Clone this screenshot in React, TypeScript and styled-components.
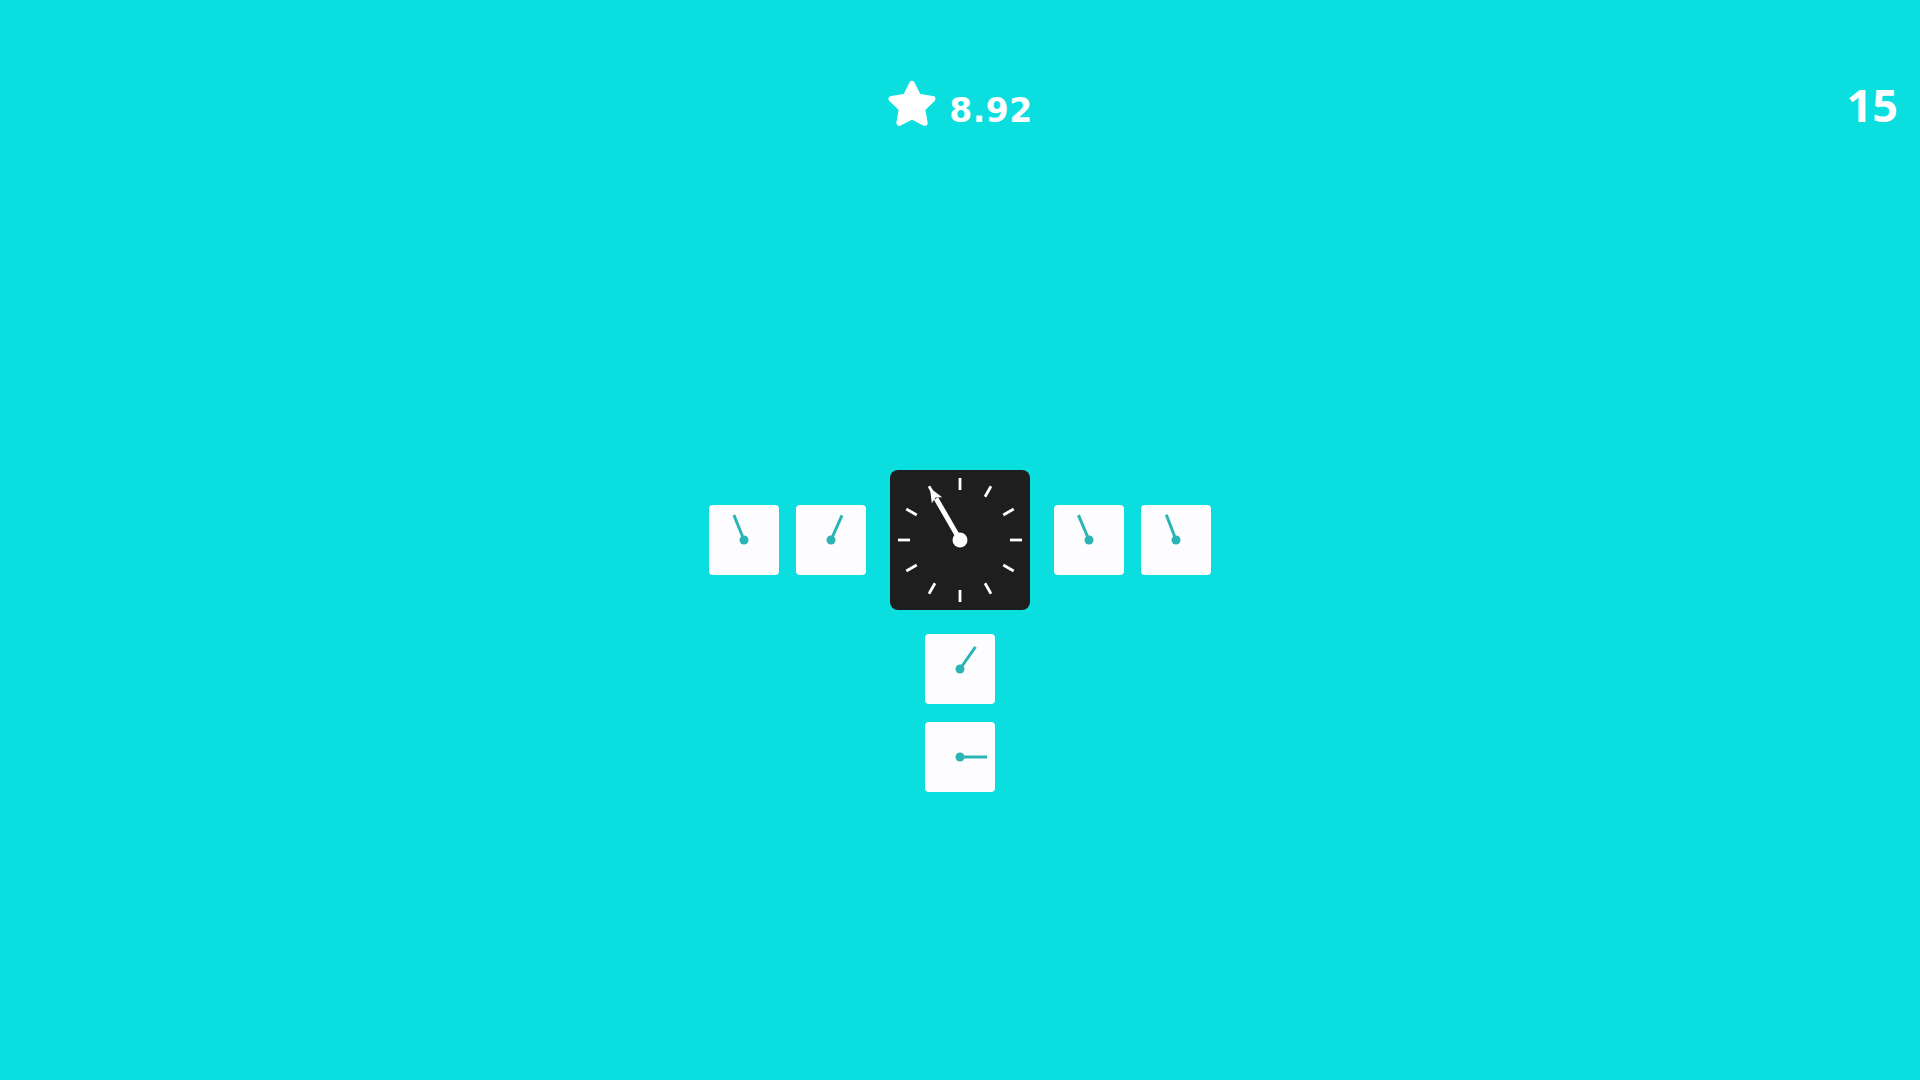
import React from "react";
import styled, { createGlobalStyle } from "styled-components";

const GlobalStyle = createGlobalStyle`
  html, body {
    margin: 0;
    padding: 0;
    background: #0adedf;
  }
  body {
    font-family: "DejaVu Sans", "Liberation Sans", sans-serif;
  }
`;

const Page = styled.div`
  width: 1920px;
  height: 1080px;
  background: #0adedf;
  display: flex;
  flex-direction: column;
  overflow: hidden;
`;

const Header = styled.header`
  display: grid;
  grid-template-columns: 1fr auto 1fr;
  align-items: start;
  height: 140px;
`;

const Score = styled.div`
  grid-column: 2;
  display: flex;
  align-items: center;
  gap: 12px;
  margin-top: 79px;
`;

const ScoreValue = styled.span`
  font-family: "DejaVu Sans", sans-serif;
  font-weight: 700;
  font-size: 33px;
  line-height: 1;
  letter-spacing: 0.5px;
  color: #ffffff;
  margin-top: 14px;
`;

const Level = styled.span`
  grid-column: 3;
  justify-self: end;
  margin-top: 82px;
  margin-right: 22px;
  font-family: "Open Sans", sans-serif;
  font-weight: 700;
  font-size: 45px;
  line-height: 1;
  color: #ffffff;
`;

const Board = styled.main`
  display: flex;
  flex-direction: column;
  align-items: center;
  padding-top: 330px;
`;

const Row = styled.div`
  display: flex;
  align-items: center;
  gap: 24px;
`;

const Pair = styled.div`
  display: flex;
  gap: 17px;
`;

const Column = styled.div`
  display: flex;
  flex-direction: column;
  gap: 18px;
  margin-top: 24px;
`;

const Tile = styled.div`
  width: 70px;
  height: 70px;
  border-radius: 4px;
  background: #fdfdff;
  display: flex;
`;

const Dial = styled.div`
  width: 140px;
  height: 140px;
  border-radius: 8px;
  background: #1e1e1f;
  display: flex;
`;

const Star = () => {
  const cx = 25;
  const cy = 26.5;
  const R = 21.5;
  const r = R * 0.5;
  const pts: string[] = [];
  for (let i = 0; i < 10; i++) {
    const rad = i % 2 === 0 ? R : r;
    const a = (Math.PI / 5) * i - Math.PI / 2;
    pts.push(`${(cx + rad * Math.cos(a)).toFixed(2)},${(cy + rad * Math.sin(a)).toFixed(2)}`);
  }
  return (
    <svg width="50" height="48" viewBox="0 0 50 48">
      <polygon
        points={pts.join(" ")}
        fill="#ffffff"
        stroke="#ffffff"
        strokeWidth="6"
        strokeLinejoin="round"
      />
    </svg>
  );
};

const TileHand = ({ angle }: { angle: number }) => (
  <svg width="70" height="70" viewBox="0 0 70 70">
    <g transform={`rotate(${angle} 35 35)`}>
      <line x1="35" y1="35" x2="35" y2="8" stroke="#2ab4b5" strokeWidth="3" />
    </g>
    <circle cx="35" cy="35" r="4.5" fill="#2ab4b5" />
  </svg>
);

const DialFace = ({ angle }: { angle: number }) => {
  const ticks = Array.from({ length: 12 }, (_, i) => i * 30);
  return (
    <svg width="140" height="140" viewBox="0 0 140 140">
      {ticks.map((t) => (
        <g key={t} transform={`rotate(${t} 70 70)`}>
          <line x1="70" y1="8" x2="70" y2="20" stroke="#ffffff" strokeWidth="2.8" />
        </g>
      ))}
      <g transform={`rotate(${angle} 70 70)`}>
        <line x1="70" y1="70" x2="70" y2="22" stroke="#ffffff" strokeWidth="5" />
        <polygon points="70,10 76,24 70,21 64,24" fill="#ffffff" />
      </g>
      <circle cx="70" cy="70" r="7.5" fill="#ffffff" />
    </svg>
  );
};

export default function App() {
  return (
    <>
      <GlobalStyle />
      <Page>
        <Header>
          <Score>
            <Star />
            <ScoreValue>8.92</ScoreValue>
          </Score>
          <Level>15</Level>
        </Header>
        <Board>
          <Row>
            <Pair>
              <Tile>
                <TileHand angle={-22} />
              </Tile>
              <Tile>
                <TileHand angle={24} />
              </Tile>
            </Pair>
            <Dial>
              <DialFace angle={-30} />
            </Dial>
            <Pair>
              <Tile>
                <TileHand angle={-23} />
              </Tile>
              <Tile>
                <TileHand angle={-21} />
              </Tile>
            </Pair>
          </Row>
          <Column>
            <Tile>
              <TileHand angle={35} />
            </Tile>
            <Tile>
              <TileHand angle={90} />
            </Tile>
          </Column>
        </Board>
      </Page>
    </>
  );
}
